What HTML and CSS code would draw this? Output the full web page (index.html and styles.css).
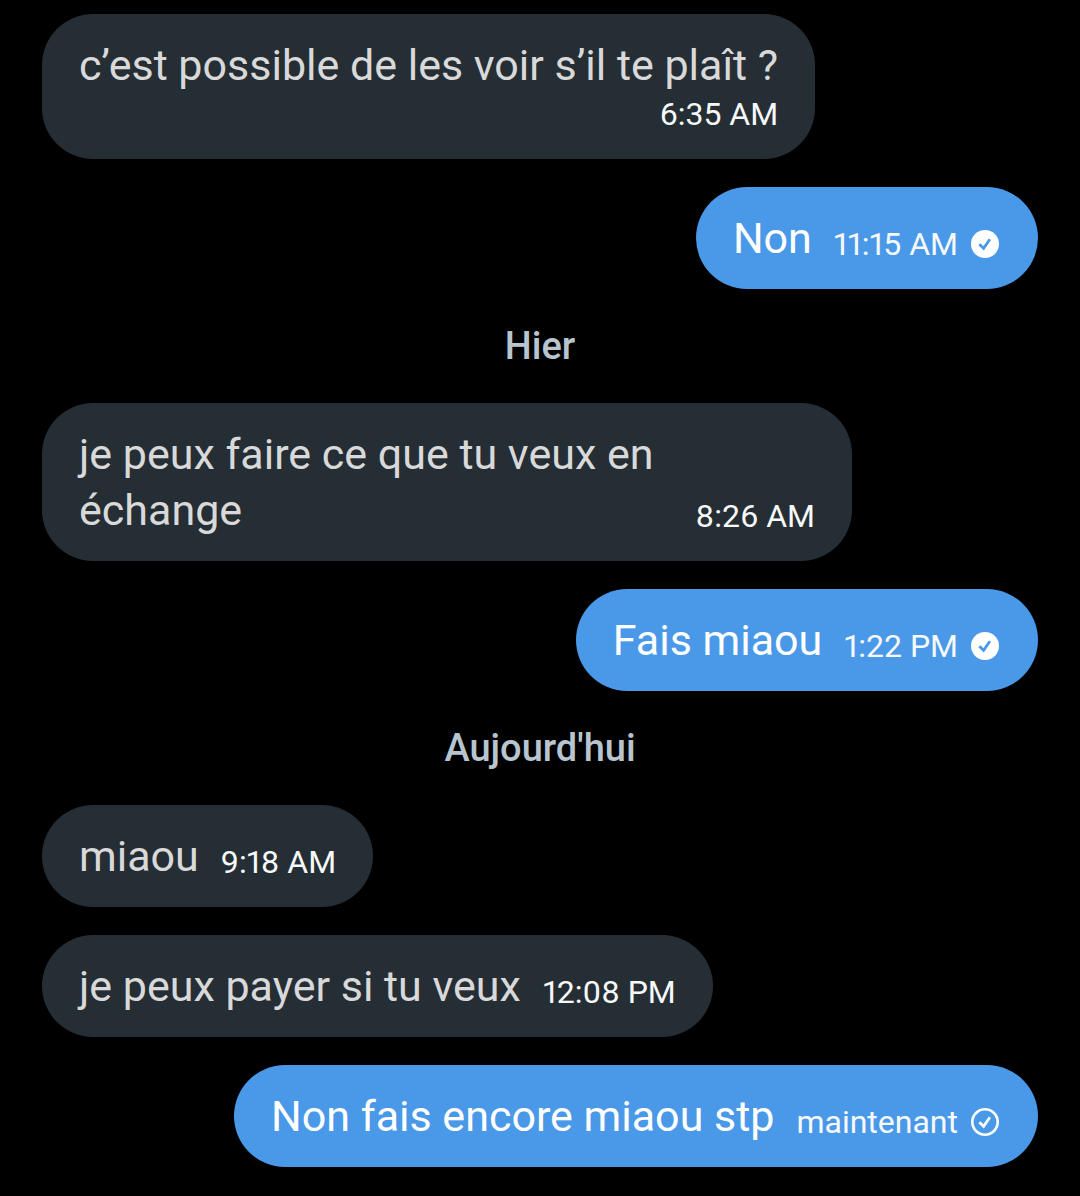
FILE: index.html
```html
<!DOCTYPE html>
<html lang="fr">
<head>
    <meta charset="UTF-8">
    <meta name="viewport" content="width=device-width, initial-scale=1.0">
    <title>Messages</title>
    <link rel="stylesheet" href="styles.css">
</head>
<body>
    <main class="chat">
        <div class="message received stacked">
            <p class="text">c’est possible de les voir s’il te plaît ?</p>
            <time class="time">6:35 AM</time>
        </div>

        <div class="message sent">
            <p class="text">Non</p>
            <time class="time">11:15 AM</time>
            <svg class="status" viewBox="0 0 28 28" role="img" aria-label="Lu">
                <circle cx="14" cy="14" r="14" fill="#fff"/>
                <path d="M8.3 14.2l4.3 4.1 6.3-9" fill="none" stroke="#4a99e9" stroke-width="2.8"/>
            </svg>
        </div>

        <h2 class="day">Hier</h2>

        <div class="message received">
            <p class="text">je peux faire ce que tu veux en échange</p>
            <time class="time">8:26 AM</time>
        </div>

        <div class="message sent">
            <p class="text">Fais miaou</p>
            <time class="time">1:22 PM</time>
            <svg class="status" viewBox="0 0 28 28" role="img" aria-label="Lu">
                <circle cx="14" cy="14" r="14" fill="#fff"/>
                <path d="M8.3 14.2l4.3 4.1 6.3-9" fill="none" stroke="#4a99e9" stroke-width="2.8"/>
            </svg>
        </div>

        <h2 class="day">Aujourd'hui</h2>

        <div class="message received">
            <p class="text">miaou</p>
            <time class="time">9:18 AM</time>
        </div>

        <div class="message received">
            <p class="text">je peux payer si tu veux</p>
            <time class="time">12:08 PM</time>
        </div>

        <div class="message sent">
            <p class="text">Non fais encore miaou stp</p>
            <time class="time">maintenant</time>
            <svg class="status" viewBox="0 0 28 28" role="img" aria-label="Envoyé">
                <circle cx="14" cy="14" r="12.7" fill="none" stroke="#fff" stroke-width="2.6"/>
                <path d="M8.3 14.2l4.3 4.1 6.3-9" fill="none" stroke="#fff" stroke-width="2.8"/>
            </svg>
        </div>
    </main>
</body>
</html>
```
FILE: styles.css
```css
body {
    margin: 0;
    background-color: #000;
    font-family: Roboto, "Noto Sans", sans-serif;
}

.chat {
    display: flex;
    flex-direction: column;
    gap: 28px;
    padding: 14px 42px 28px;
}

.message {
    display: flex;
    align-items: flex-end;
    box-sizing: border-box;
    max-width: 810px;
    padding: 23px 37px;
    border-radius: 51px;
}

.received {
    align-self: flex-start;
    background-color: #262e35;
    color: #d9d9d9;
}

.sent {
    align-self: flex-end;
    background-color: #4a99e9;
    color: #fff;
}

.stacked {
    flex-direction: column;
}

.text {
    margin: 0;
    font-size: 43px;
    line-height: 56px;
}

.time {
    margin-left: 22px;
    color: #f7f9f9;
    font-size: 32px;
    font-variant-numeric: proportional-nums;
    line-height: 43px;
    white-space: nowrap;
}

.status {
    flex: none;
    width: 28px;
    height: 28px;
    margin: 0 2px 8px 13px;
}

.day {
    margin: 0;
    color: #b8c5cf;
    font-size: 38px;
    font-weight: 500;
    line-height: 58px;
    text-align: center;
}
```
